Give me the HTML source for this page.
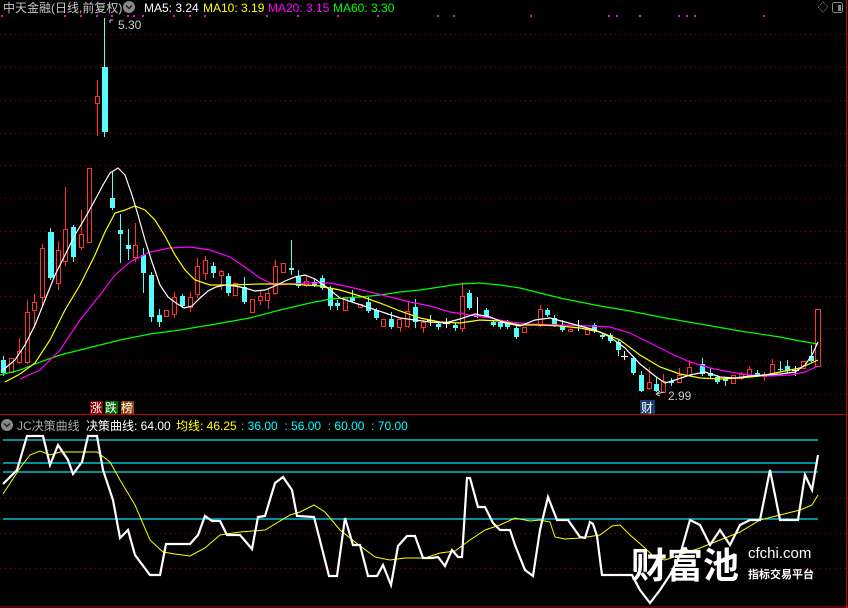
<!DOCTYPE html>
<html><head><meta charset="utf-8"><style>
html,body{margin:0;padding:0;background:#000;width:848px;height:608px;overflow:hidden}
svg{display:block}
text{font-family:"Liberation Sans","Noto Sans CJK SC",sans-serif;font-size:12px}
.c{fill:#54fcfc}.cw{stroke:#54fcfc;stroke-width:1}
.r{fill:#000;stroke:#ff3232;stroke-width:1}.rw{stroke:#ff3232;stroke-width:1}
.g{stroke:#a00000;stroke-width:1;stroke-dasharray:1 4}
</style></head><body>
<svg width="848" height="608" viewBox="0 0 848 608" xmlns="http://www.w3.org/2000/svg">
<rect width="848" height="608" fill="#000"/>
<g class="g">
<line x1="0" y1="34.5" x2="846" y2="34.5"/><line x1="0" y1="67.5" x2="846" y2="67.5"/><line x1="0" y1="100.5" x2="846" y2="100.5"/><line x1="0" y1="133.5" x2="846" y2="133.5"/><line x1="0" y1="165.5" x2="846" y2="165.5"/><line x1="0" y1="198.5" x2="846" y2="198.5"/><line x1="0" y1="231.5" x2="846" y2="231.5"/><line x1="0" y1="263.5" x2="846" y2="263.5"/><line x1="0" y1="296.5" x2="846" y2="296.5"/><line x1="0" y1="328.5" x2="846" y2="328.5"/><line x1="0" y1="361.5" x2="846" y2="361.5"/><line x1="0" y1="394.5" x2="846" y2="394.5"/>
<line x1="0" y1="498.5" x2="846" y2="498.5"/><line x1="0" y1="533.5" x2="846" y2="533.5"/><line x1="0" y1="568.5" x2="846" y2="568.5"/>
</g>
<line x1="0" y1="414.5" x2="846" y2="414.5" stroke="#c00000"/>
<line x1="846.5" y1="0" x2="846.5" y2="608" stroke="#c00000"/>
<line x1="0" y1="607" x2="848" y2="607" stroke="#c00000"/>
<g fill="#ff00ff">
<rect x="1" y="15" width="2" height="2"/><rect x="64" y="15" width="2" height="2"/><rect x="80" y="15" width="2" height="2"/><rect x="96" y="15" width="2" height="2"/><rect x="111" y="15" width="2" height="2"/><rect x="127" y="15" width="2" height="2"/><rect x="133" y="15" width="2" height="2"/><rect x="142" y="15" width="2" height="2"/><rect x="173" y="15" width="2" height="2"/><rect x="189" y="15" width="2" height="2"/><rect x="204" y="15" width="2" height="2"/><rect x="266" y="15" width="2" height="2"/><rect x="297" y="15" width="2" height="2"/><rect x="337" y="15" width="2" height="2"/><rect x="377" y="15" width="2" height="2"/><rect x="437" y="15" width="2" height="2"/><rect x="453" y="15" width="2" height="2"/><rect x="530" y="15" width="2" height="2"/><rect x="608" y="15" width="2" height="2"/><rect x="616" y="15" width="2" height="2"/><rect x="639" y="15" width="2" height="2"/><rect x="678" y="15" width="2" height="2"/><rect x="686" y="15" width="2" height="2"/><rect x="694" y="15" width="2" height="2"/><rect x="763" y="15" width="2" height="2"/>
</g>
<text x="3" y="12" fill="#c8c8c8">中天金融(日线,前复权)</text>
<circle cx="129" cy="7" r="6" fill="#888"/><path d="M126 5.5l3 3 3-3" stroke="#222" stroke-width="1.5" fill="none"/>
<text x="144" y="12" fill="#fff">MA5: 3.24</text>
<text x="203" y="12" fill="#ffff00">MA10: 3.19</text>
<text x="268" y="12" fill="#ff00ff">MA20: 3.15</text>
<text x="333" y="12" fill="#00ff00">MA60: 3.30</text>
<path d="M823 2l5 5-5 5-5-5z" fill="none" stroke="#888" stroke-dasharray="1 1"/>
<rect x="832.5" y="2.5" width="10" height="10" rx="2" fill="none" stroke="#888"/><rect x="838" y="5" width="3" height="6" fill="#888"/>
<g>
<g class="cw">
<line x1="104.5" y1="18" x2="104.5" y2="137"/><line x1="3.5" y1="356" x2="3.5" y2="376"/><line x1="50.5" y1="228" x2="50.5" y2="280"/><line x1="73.5" y1="225" x2="73.5" y2="262"/><line x1="112.5" y1="172" x2="112.5" y2="210"/><line x1="120.5" y1="214" x2="120.5" y2="263"/><line x1="128.5" y1="229" x2="128.5" y2="260"/><line x1="143.5" y1="248" x2="143.5" y2="293"/><line x1="151.5" y1="272" x2="151.5" y2="322"/><line x1="159.5" y1="309" x2="159.5" y2="327"/><line x1="182.5" y1="294" x2="182.5" y2="308"/>
<line x1="213.5" y1="262" x2="213.5" y2="278"/><line x1="228.5" y1="273" x2="228.5" y2="296"/><line x1="244.5" y1="277" x2="244.5" y2="304"/><line x1="291.5" y1="240" x2="291.5" y2="275"/><line x1="298.5" y1="270" x2="298.5" y2="288"/><line x1="314.5" y1="279" x2="314.5" y2="287"/><line x1="322.5" y1="275" x2="322.5" y2="290"/><line x1="330.5" y1="286" x2="330.5" y2="310"/><line x1="337.5" y1="300" x2="337.5" y2="310"/><line x1="352.5" y1="290" x2="352.5" y2="303"/><line x1="368.5" y1="297" x2="368.5" y2="313"/><line x1="376.5" y1="308" x2="376.5" y2="320"/><line x1="391.5" y1="312" x2="391.5" y2="329"/><line x1="415.5" y1="299" x2="415.5" y2="328"/><line x1="438.5" y1="321" x2="438.5" y2="330"/><line x1="455.5" y1="322" x2="455.5" y2="331"/><line x1="469.5" y1="290" x2="469.5" y2="310"/><line x1="486.5" y1="308" x2="486.5" y2="318"/><line x1="493.5" y1="320" x2="493.5" y2="327"/><line x1="500.5" y1="320" x2="500.5" y2="329"/><line x1="507.5" y1="320" x2="507.5" y2="329"/><line x1="516.5" y1="325" x2="516.5" y2="339"/><line x1="547.5" y1="308" x2="547.5" y2="317"/><line x1="554.5" y1="315" x2="554.5" y2="327"/><line x1="562.5" y1="320" x2="562.5" y2="332"/><line x1="594.5" y1="323" x2="594.5" y2="333"/><line x1="602.5" y1="333" x2="602.5" y2="339"/><line x1="610.5" y1="333" x2="610.5" y2="343"/><line x1="618.5" y1="340" x2="618.5" y2="356"/><line x1="633.5" y1="356" x2="633.5" y2="375"/><line x1="641.5" y1="371" x2="641.5" y2="392"/><line x1="656.5" y1="378" x2="656.5" y2="392"/><line x1="671.5" y1="378" x2="671.5" y2="386"/><line x1="702.5" y1="358" x2="702.5" y2="376"/><line x1="710.5" y1="368" x2="710.5" y2="378"/><line x1="717.5" y1="375" x2="717.5" y2="384"/><line x1="725.5" y1="377" x2="725.5" y2="386"/><line x1="757.5" y1="370" x2="757.5" y2="377"/><line x1="780.5" y1="361" x2="780.5" y2="372"/><line x1="787.5" y1="360" x2="787.5" y2="373"/><line x1="811.5" y1="345" x2="811.5" y2="362"/>
</g>
<g class="rw">
<line x1="97.5" y1="80" x2="97.5" y2="136"/><line x1="19.5" y1="338" x2="19.5" y2="364"/><line x1="27.5" y1="300" x2="27.5" y2="364"/><line x1="34.5" y1="294" x2="34.5" y2="328"/><line x1="42.5" y1="244" x2="42.5" y2="306"/><line x1="58.5" y1="241" x2="58.5" y2="290"/><line x1="65.5" y1="187" x2="65.5" y2="266"/><line x1="81.5" y1="210" x2="81.5" y2="250"/><line x1="135.5" y1="223" x2="135.5" y2="262"/><line x1="174.5" y1="292" x2="174.5" y2="318"/><line x1="190.5" y1="292" x2="190.5" y2="312"/><line x1="197.5" y1="258" x2="197.5" y2="298"/>
<line x1="205.5" y1="256" x2="205.5" y2="280"/><line x1="221.5" y1="270" x2="221.5" y2="290"/><line x1="260.5" y1="290" x2="260.5" y2="305"/><line x1="268.5" y1="288" x2="268.5" y2="309"/><line x1="275.5" y1="260" x2="275.5" y2="295"/><line x1="306.5" y1="275" x2="306.5" y2="287"/><line x1="400.5" y1="318" x2="400.5" y2="332"/><line x1="408.5" y1="302" x2="408.5" y2="328"/><line x1="423.5" y1="320" x2="423.5" y2="333"/><line x1="462.5" y1="282" x2="462.5" y2="332"/><line x1="540.5" y1="305" x2="540.5" y2="327"/><line x1="649.5" y1="367" x2="649.5" y2="390"/><line x1="663.5" y1="374" x2="663.5" y2="393"/><line x1="679.5" y1="368" x2="679.5" y2="383"/><line x1="689.5" y1="360" x2="689.5" y2="376"/><line x1="741.5" y1="372" x2="741.5" y2="380"/><line x1="749.5" y1="366" x2="749.5" y2="377"/><line x1="764.5" y1="372" x2="764.5" y2="381"/><line x1="772.5" y1="359" x2="772.5" y2="376"/>
</g>
<g stroke="#fff">
<line x1="430.5" y1="315" x2="430.5" y2="326"/><line x1="427" y1="320.5" x2="434" y2="320.5"/><line x1="446.5" y1="318" x2="446.5" y2="328"/><line x1="443" y1="323.5" x2="450" y2="323.5"/><line x1="477.5" y1="297" x2="477.5" y2="318"/><line x1="474" y1="316.5" x2="481" y2="316.5"/><line x1="578.5" y1="320" x2="578.5" y2="331"/><line x1="575" y1="325.5" x2="582" y2="325.5"/><line x1="624.5" y1="351" x2="624.5" y2="360"/><line x1="621" y1="356.5" x2="628" y2="356.5"/><line x1="795.5" y1="366" x2="795.5" y2="376"/><line x1="792" y1="370.5" x2="799" y2="370.5"/>
</g>
<g class="c">
<rect x="102" y="67" width="6" height="65"/><rect x="1" y="360" width="5" height="13"/><rect x="48" y="232" width="6" height="46"/><rect x="71" y="227" width="5" height="30"/><rect x="110" y="198" width="5" height="10"/><rect x="118" y="230" width="5" height="4"/><rect x="126" y="245" width="5" height="4"/><rect x="141" y="255" width="5" height="18"/><rect x="149" y="275" width="5" height="42"/><rect x="157" y="315" width="5" height="7"/><rect x="180" y="296" width="5" height="10"/>
<rect x="211" y="266" width="5" height="7"/><rect x="226" y="276" width="5" height="17"/><rect x="242" y="287" width="5" height="15"/><rect x="289" y="268" width="5" height="2"/><rect x="296" y="277" width="5" height="9"/><rect x="312" y="282" width="5" height="3"/><rect x="320" y="278" width="5" height="10"/><rect x="328" y="289" width="5" height="17"/><rect x="335" y="303" width="5" height="3"/><rect x="350" y="297" width="5" height="4"/><rect x="366" y="302" width="5" height="9"/><rect x="374" y="310" width="5" height="8"/><rect x="389" y="319" width="5" height="8"/><rect x="413" y="307" width="5" height="15"/><rect x="436" y="324" width="5" height="3"/><rect x="453" y="325" width="5" height="3"/><rect x="467" y="293" width="5" height="15"/><rect x="484" y="310" width="5" height="6"/><rect x="491" y="322" width="5" height="3"/><rect x="498" y="322" width="5" height="5"/><rect x="505" y="323" width="5" height="4"/><rect x="514" y="328" width="5" height="9"/><rect x="545" y="310" width="5" height="5"/><rect x="552" y="318" width="5" height="7"/><rect x="560" y="326" width="5" height="4"/><rect x="592" y="325" width="5" height="6"/><rect x="600" y="335" width="5" height="2"/><rect x="608" y="335" width="5" height="6"/><rect x="616" y="342" width="5" height="8"/><rect x="631" y="358" width="5" height="15"/><rect x="639" y="375" width="5" height="16"/><rect x="654" y="384" width="5" height="7"/><rect x="669" y="381" width="5" height="2"/><rect x="700" y="364" width="5" height="10"/><rect x="708" y="373" width="5" height="3"/><rect x="715" y="377" width="5" height="5"/><rect x="723" y="379" width="5" height="2"/><rect x="755" y="373" width="5" height="2"/><rect x="778" y="369" width="5" height="1"/><rect x="785" y="366" width="5" height="5"/><rect x="809" y="356" width="5" height="5"/>
</g>
<g class="r">
<rect x="95.5" y="96.5" width="4" height="7"/><rect x="9.5" y="358.5" width="4" height="14"/><rect x="17.5" y="351.5" width="4" height="11"/><rect x="25.5" y="312.5" width="4" height="50"/><rect x="32.5" y="302.5" width="4" height="8"/><rect x="40.5" y="248.5" width="4" height="49"/><rect x="56.5" y="250.5" width="4" height="33"/><rect x="63.5" y="229.5" width="4" height="32"/><rect x="79.5" y="234.5" width="4" height="13"/><rect x="87.5" y="168.5" width="4" height="74"/><rect x="133.5" y="245.5" width="4" height="12"/><rect x="164.5" y="310.5" width="4" height="6"/><rect x="172.5" y="297.5" width="4" height="17"/><rect x="188.5" y="297.5" width="4" height="10"/><rect x="195.5" y="266.5" width="4" height="28"/>
<rect x="203.5" y="260.5" width="4" height="13"/><rect x="219.5" y="271.5" width="4" height="4"/><rect x="233.5" y="283.5" width="4" height="12"/><rect x="250.5" y="299.5" width="4" height="13"/><rect x="258.5" y="296.5" width="4" height="4"/><rect x="265.5" y="293.5" width="4" height="7"/><rect x="273.5" y="266.5" width="4" height="27"/><rect x="281.5" y="263.5" width="4" height="9"/><rect x="304.5" y="281.5" width="4" height="4"/><rect x="343.5" y="297.5" width="4" height="13"/><rect x="358.5" y="304.5" width="4" height="3"/><rect x="381.5" y="319.5" width="4" height="7"/><rect x="397.5" y="319.5" width="4" height="8"/><rect x="405.5" y="311.5" width="4" height="15"/><rect x="421.5" y="322.5" width="4" height="5"/><rect x="460.5" y="296.5" width="4" height="32"/><rect x="522.5" y="327.5" width="4" height="5"/><rect x="538.5" y="309.5" width="4" height="16"/><rect x="568.5" y="329.5" width="4" height="2"/><rect x="585.5" y="328.5" width="4" height="6"/><rect x="647.5" y="382.5" width="4" height="6"/><rect x="661.5" y="381.5" width="4" height="11"/><rect x="677.5" y="375.5" width="4" height="7"/><rect x="687.5" y="367.5" width="4" height="8"/><rect x="731.5" y="375.5" width="4" height="8"/><rect x="739.5" y="374.5" width="4" height="4"/><rect x="747.5" y="369.5" width="4" height="7"/><rect x="762.5" y="374.5" width="4" height="2"/><rect x="770.5" y="364.5" width="4" height="11"/><rect x="801.5" y="361.5" width="4" height="7"/><rect x="815.5" y="309.5" width="5" height="57"/>
</g>
</g>
<g fill="none" stroke-width="1.2">
<polyline stroke="#00ff00" points="0,375 20,370 40,362 60,355 80,350 100,345 120,340 150,334 180,330 210,325 250,318 280,310 310,303 330,299 360,297 380,295 400,292 420,290 440,287 460,284 480,283 500,285 520,288 540,293 560,298 580,302 600,306 630,311 660,317 700,324 740,331 780,337 800,341 818,344"/>
<polyline stroke="#ff00ff" points="20,379 40,370 60,350 80,320 100,295 115,275 130,262 150,252 170,248 190,247 210,250 230,257 245,267 260,278 275,285 290,284 310,283 330,283 350,287 370,292 390,297 410,302 430,306 450,312 470,315 490,318 510,322 530,324 560,325 590,326 610,327 630,333 650,343 670,353 690,362 710,368 730,372 750,375 770,376 790,375 805,372 818,366"/>
<polyline stroke="#ffff00" points="5,382 20,374 35,363 50,340 65,310 80,285 95,255 105,232 115,213 125,210 135,206 145,210 155,220 165,236 175,255 185,270 195,280 210,285 230,285 260,284 290,284 320,286 340,290 360,296 380,303 400,311 420,318 440,322 460,323 480,320 500,321 520,325 540,325 560,326 580,328 600,332 620,340 640,355 660,367 680,374 700,378 720,379 740,378 760,376 780,372 800,368 818,360"/>
<polyline stroke="#ffffff" points="3,370 15,360 25,345 35,325 45,300 55,275 65,255 75,235 85,218 95,200 103,185 110,173 118,168 125,175 132,195 138,215 145,240 152,262 160,285 168,297 176,303 184,308 192,306 200,298 208,291 216,287 225,285 235,286 245,288 255,291 265,290 275,286 285,281 295,277 305,275 315,279 325,286 340,298 355,303 370,308 385,313 400,318 415,320 430,322 445,323 460,319 475,314 490,317 505,323 520,326 535,320 550,318 565,322 580,326 595,330 610,337 625,348 640,364 655,376 665,383 675,380 690,375 705,372 720,377 735,378 750,376 765,375 780,374 795,372 805,365 812,355 818,342"/>
</g>
<path d="M110 20h3 M110 20v3" stroke="#c8c8c8"/>
<text x="118" y="29" fill="#c8c8c8">5.30</text>
<path d="M656 394l8-2M656 394l4-3M656 394l4 2" stroke="#c8c8c8" fill="none"/>
<text x="668" y="400" fill="#c8c8c8">2.99</text>
<rect x="640" y="400" width="15" height="14" fill="#1c3c70"/>
<text x="641" y="412" fill="#fff">财</text>
<rect x="90" y="401" width="13" height="13" fill="#8b0000"/><text x="90" y="412" fill="#fff">涨</text>
<rect x="105" y="401" width="13" height="13" fill="#006400"/><text x="105" y="412" fill="#fff">跌</text>
<rect x="121" y="401" width="13" height="13" fill="#8b4500"/><text x="121" y="412" fill="#fff">榜</text>
<circle cx="7" cy="425" r="6" fill="#888"/><path d="M4 423.5l3 3 3-3" stroke="#222" stroke-width="1.5" fill="none"/>
<text x="17" y="430" fill="#aaa">JC决策曲线</text>
<text x="86" y="430" fill="#fff">决策曲线: 64.00</text>
<text x="176" y="430" fill="#ffff00">均线: 46.25</text>
<text x="241" y="430" fill="#00ffff">: 36.00 &#160;: 56.00 &#160;: 60.00 &#160;: 70.00</text>
<g stroke="#00e5ff" stroke-width="1.3">
<line x1="3" y1="440" x2="818" y2="440"/><line x1="3" y1="463" x2="818" y2="463"/><line x1="3" y1="472" x2="818" y2="472"/><line x1="3" y1="519" x2="818" y2="519"/>
</g>
<polyline fill="none" stroke="#ffff00" stroke-width="1" points="3,494 20,468 30,455 40,451 50,455 60,452 97,452 110,462 120,480 135,505 150,540 163,552 175,554 190,556 205,548 220,535 240,532 265,530 290,515 300,512 314,505 325,512 340,530 355,542 375,557 390,560 405,558 425,558 440,553 455,551 470,540 485,530 500,525 515,518 530,521 540,520 550,522 555,537 565,539 580,538 600,535 612,526 620,525 630,535 645,548 655,558 665,560 680,555 700,548 720,540 740,532 760,520 780,515 800,510 812,505 818,495"/>
<polyline fill="none" stroke="#fff" stroke-width="2.2" points="3,484 17,470 27,436 43,436 50,465 58,445 68,460 73,474 82,462 88,436 97,436 103,470 113,500 120,538 128,530 135,555 150,575 160,575 166,544 172,544 190,544 198,535 205,516 212,521 220,521 227,535 240,535 252,549 258,517 265,516 275,483 283,477 292,490 297,516 314,517 329,576 337,576 345,518 353,545 360,545 368,576 377,576 383,565 391,585 398,546 407,536 415,536 423,558 432,558 438,557 445,566 452,550 458,557 462,557 467,478 470,478 478,507 485,507 493,523 500,530 510,530 515,545 525,570 533,576 540,530 548,497 557,520 568,520 575,530 580,537 585,538 590,522 593,524 597,536 602,575 632,575 640,590 650,603 660,590 670,575 680,555 690,520 700,525 710,545 720,530 730,545 740,525 750,520 760,520 770,470 780,520 798,520 805,475 812,490 818,455"/>
<text x="631" y="578" fill="#fff" style="font-size:36px;font-weight:bold;font-family:'Noto Sans CJK SC',sans-serif">财富池</text>
<text x="748" y="558" fill="#fff" style="font-size:15px">cfchi.com</text>
<text x="748" y="578" fill="#fff" style="font-size:11px;font-weight:bold;font-family:'Noto Sans CJK SC',sans-serif">指标交易平台</text>
</svg>
</body></html>
